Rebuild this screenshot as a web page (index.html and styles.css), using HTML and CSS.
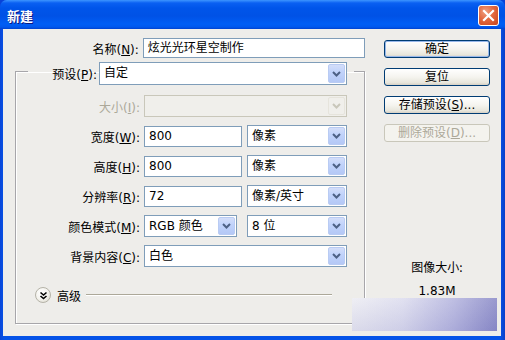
FILE: index.html
```html
<!DOCTYPE html>
<html lang="zh-CN">
<head>
<meta charset="utf-8">
<title>新建</title>
<link rel="stylesheet" href="styles.css">
</head>
<body>
<div class="window">
  <div class="titlebar">
    <span class="title">新建</span>
    <span class="close"><svg width="13" height="13" viewBox="0 0 13 13"><path d="M2 2 L11 11 M11 2 L2 11" stroke="#fff" stroke-width="2.2" stroke-linecap="square"/></svg></span>
  </div>
  <div class="client">
    <div class="main">
      <div class="name-row">
        <span class="lbl name-lbl">名称(<u>N</u>):</span>
        <div class="input w-name">炫光光环星空制作</div>
      </div>
      <fieldset class="group">
        <legend class="preset">
          <span class="lbl preset-lbl">预设(<u>P</u>):</span>
          <div class="combo w-preset"><span class="val">自定</span><span class="arrow"><svg width="9" height="6" viewBox="0 0 9 6"><path d="M1 1 L4.5 4.5 L8 1" fill="none" stroke="#4d6185" stroke-width="2"/></svg></span></div>
        </legend>
        <div class="row first">
          <span class="lbl disabled">大小(<u>I</u>):</span>
          <div class="combo w-full is-disabled"><span class="val"></span><span class="arrow"><svg width="9" height="6" viewBox="0 0 9 6"><path d="M1 1 L4.5 4.5 L8 1" fill="none" stroke="#c9c7ba" stroke-width="2"/></svg></span></div>
        </div>
        <div class="row">
          <span class="lbl">宽度(<u>W</u>):</span>
          <div class="input w-num">800</div>
          <div class="combo w-unit"><span class="val">像素</span><span class="arrow"><svg width="9" height="6" viewBox="0 0 9 6"><path d="M1 1 L4.5 4.5 L8 1" fill="none" stroke="#4d6185" stroke-width="2"/></svg></span></div>
        </div>
        <div class="row">
          <span class="lbl">高度(<u>H</u>):</span>
          <div class="input w-num">800</div>
          <div class="combo w-unit"><span class="val">像素</span><span class="arrow"><svg width="9" height="6" viewBox="0 0 9 6"><path d="M1 1 L4.5 4.5 L8 1" fill="none" stroke="#4d6185" stroke-width="2"/></svg></span></div>
        </div>
        <div class="row">
          <span class="lbl">分辨率(<u>R</u>):</span>
          <div class="input w-num">72</div>
          <div class="combo w-unit"><span class="val">像素/英寸</span><span class="arrow"><svg width="9" height="6" viewBox="0 0 9 6"><path d="M1 1 L4.5 4.5 L8 1" fill="none" stroke="#4d6185" stroke-width="2"/></svg></span></div>
        </div>
        <div class="row">
          <span class="lbl">颜色模式(<u>M</u>):</span>
          <div class="combo w-mode"><span class="val">RGB 颜色</span><span class="arrow"><svg width="9" height="6" viewBox="0 0 9 6"><path d="M1 1 L4.5 4.5 L8 1" fill="none" stroke="#4d6185" stroke-width="2"/></svg></span></div>
          <div class="combo w-unit"><span class="val">8 位</span><span class="arrow"><svg width="9" height="6" viewBox="0 0 9 6"><path d="M1 1 L4.5 4.5 L8 1" fill="none" stroke="#4d6185" stroke-width="2"/></svg></span></div>
        </div>
        <div class="row">
          <span class="lbl">背景内容(<u>C</u>):</span>
          <div class="combo w-full"><span class="val">白色</span><span class="arrow"><svg width="9" height="6" viewBox="0 0 9 6"><path d="M1 1 L4.5 4.5 L8 1" fill="none" stroke="#4d6185" stroke-width="2"/></svg></span></div>
        </div>
        <div class="adv">
          <span class="adv-btn"><svg width="9" height="9" viewBox="0 0 9 9"><path d="M1.5 1.5 L4.5 4 L7.5 1.5 M1.5 5 L4.5 7.5 L7.5 5" fill="none" stroke="#000" stroke-width="1.6"/></svg></span>
          <span class="adv-text">高级</span>
          <span class="adv-line"></span>
        </div>
      </fieldset>
    </div>
    <div class="side">
      <div class="btn default">确定</div>
      <div class="btn">复位</div>
      <div class="btn">存储预设(<u>S</u>)...</div>
      <div class="btn is-disabled">删除预设(<u>D</u>)...</div>
      <div class="info">
        <div class="info-title">图像大小:</div>
        <div class="info-size">1.83M</div>
      </div>
    </div>
    <div class="smudge"></div>
  </div>
</div>
</body>
</html>
```

FILE: styles.css
```css
* { box-sizing: border-box; }
html, body { margin: 0; padding: 0; }
body {
  width: 505px;
  height: 340px;
  overflow: hidden;
  font-family: "DejaVu Sans", "Noto Sans CJK SC", sans-serif;
  font-size: 12px;
  color: #000;
  background: #0842d8;
}
u { text-decoration: underline; text-underline-offset: 1px; }

.window {
  width: 505px;
  height: 340px;
  display: flex;
  flex-direction: column;
  background: linear-gradient(to right, #0a46d8 0, #0553e8 4px, #0553e8 500px, #0a3fc8 505px);
  border-radius: 7px 7px 0 0;
  overflow: hidden;
}

.titlebar {
  height: 29px;
  flex: none;
  position: relative;
  display: flex;
  align-items: center;
  padding-left: 7px;
  background: linear-gradient(to bottom, #3d95ff 0, #0a60f2 3px, #0055ea 8px, #0052e6 16px, #005ef5 24px, #0058ee 27px, #0042d0 29px);
}
.title {
  color: #fff;
  font-family: "Noto Sans CJK SC", sans-serif;
  font-weight: bold;
  font-size: 13px;
  text-shadow: 1px 1px 0 #0a1883;
  margin-top: 1px;
}
.close {
  position: absolute;
  right: 6px;
  top: 5px;
  width: 21px;
  height: 21px;
  border: 1px solid #fff;
  border-radius: 3px;
  background: radial-gradient(circle at 35% 30%, #f0a080 0, #e2683f 45%, #c8441c 100%);
  display: flex;
  align-items: center;
  justify-content: center;
}

.client {
  flex: 1;
  margin: 0 4px 4px 3px;
  background: #eeedea;
  position: relative;
  display: flex;
}

.main {
  width: 362px;
  padding-top: 9px;
}

.lbl {
  font-family: "DejaVu Sans", "Noto Sans CJK SC", sans-serif;
  white-space: nowrap;
  text-align: right;
}
.lbl.disabled { color: #aca899; }

.name-row {
  display: flex;
  align-items: center;
  height: 20px;
}
.name-lbl { width: 137px; margin-right: 4px; }

.input {
  height: 20px;
  border: 1px solid #7f9db9;
  background: #fff;
  padding: 0 0 0 4px;
  line-height: 18px;
  font-family: "DejaVu Sans", "Noto Sans CJK SC", sans-serif;
  white-space: nowrap;
}
.w-name { width: 224px; }
.w-num { width: 98px; height: 21px; line-height: 19px; }

.group {
  margin: -1px 0 0 12px;
  padding: 0 0 20px 0;
  width: 350px;
  border: 1px solid #a7a6aa;
  box-shadow: 1px 1px 0 #fff, inset 1px 1px 0 #fff;
  min-width: 0;
}
.preset {
  display: flex;
  align-items: center;
  margin-left: 12px;
  padding: 5px 7px 0 0;
}
.preset-lbl { width: 69px; margin-right: 2px; }

.combo {
  height: 22px;
  border: 1px solid #7f9db9;
  background: #fff;
  display: flex;
  align-items: stretch;
  justify-content: space-between;
  padding: 1px;
}
.combo .val {
  padding-left: 3px;
  line-height: 18px;
  white-space: nowrap;
}
.combo .arrow {
  width: 17px;
  border: 1px solid #b9cbf3;
  border-radius: 2px;
  background: linear-gradient(to bottom, #d4def9 0, #c1d3fb 40%, #b4c8f6 100%);
  display: flex;
  align-items: center;
  justify-content: center;
}
.combo.is-disabled { background: #f0efeb; border-color: #c9c7ba; }
.combo.is-disabled .arrow { background: #f0efeb; border-color: #e6e4dc; }

.w-preset { width: 248px; height: 23px; }
.w-full { width: 203px; }
.w-unit { width: 100px; }
.w-mode { width: 93px; }

.row {
  display: flex;
  align-items: center;
  gap: 5px;
  height: 22px;
  margin-top: 8px;
}
.row.first { margin-top: 10px; }
.row .lbl { width: 124px; margin-right: -1px; }
.row .w-num + .combo { margin-left: 0; }
.row .w-mode + .combo { margin-left: 5px; }

.adv {
  display: flex;
  align-items: center;
  height: 16px;
  margin-top: 20px;
  padding-left: 19px;
  padding-right: 32px;
}
.adv-btn {
  width: 16px;
  height: 16px;
  border-radius: 50%;
  border: 1px solid #b5b3a8;
  background: radial-gradient(circle at 40% 35%, #ffffff 0, #f4f3ee 50%, #d8d5c8 100%);
  display: flex;
  align-items: center;
  justify-content: center;
}
.adv-text {
  margin-left: 6px;
  font-family: "Noto Sans CJK SC", sans-serif;
}
.adv-line {
  flex: 1;
  margin-left: 5px;
  height: 2px;
  border-top: 1px solid #aca899;
  border-bottom: 1px solid #fff;
}

.side {
  margin-left: 19px;
  width: 106px;
  padding-top: 11px;
  display: flex;
  flex-direction: column;
}
.btn {
  height: 18px;
  margin-bottom: 10px;
  border: 1px solid #003c74;
  border-radius: 3px;
  background: linear-gradient(to bottom, #ffffff 0, #f5f4ef 50%, #e8e6dc 85%, #d6d0c5 100%);
  text-align: center;
  line-height: 16px;
  white-space: nowrap;
  font-family: "DejaVu Sans", "Noto Sans CJK SC", sans-serif;
}
.btn.default { box-shadow: inset 0 0 0 1px #98b8ea; }
.btn.is-disabled {
  border-color: #c9c7ba;
  background: #f4f3ee;
  color: #aca899;
}
.info {
  margin-top: 107px;
  text-align: center;
}
.info-title { line-height: 16px; font-family: "Noto Sans CJK SC", sans-serif; }
.info-size { line-height: 16px; margin-top: 8px; }

.smudge {
  position: absolute;
  left: 349px;
  top: 269px;
  width: 145px;
  height: 33px;
  background:
    linear-gradient(to bottom, rgba(255,255,255,0.15) 0, rgba(120,120,190,0.15) 100%),
    linear-gradient(to right, #ececf2 0, #dcdcee 35%, #b4b4de 70%, #8888c6 100%);
}
```
